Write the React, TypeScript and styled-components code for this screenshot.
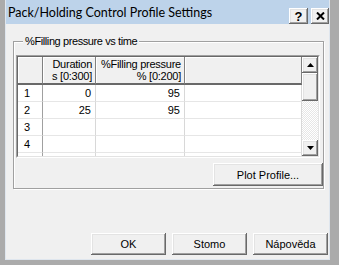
import { Fragment } from "react";
import styled, { createGlobalStyle } from "styled-components";

const GlobalStyle = createGlobalStyle`
  html, body {
    margin: 0;
    padding: 0;
    background: #ababab;
  }
  * {
    box-sizing: border-box;
  }
`;

const bevel = `
  background: #f0f0f0;
  box-shadow: inset -1px -1px #696969, inset 1px 1px #fff, inset -2px -2px #a0a0a0, inset 2px 2px #e3e3e3;
`;

const Window = styled.div`
  margin-left: 5px;
  width: 325px;
  height: 260px;
  background: #f0f0f0;
  border: 1px solid #dfe6ee;
  border-top: none;
  display: flex;
  flex-direction: column;
  font-family: "Liberation Sans", Arial, sans-serif;
  font-size: 11px;
  color: #000;
`;

const TitleBar = styled.div`
  height: 24px;
  background: #bdd3ea;
  display: flex;
  align-items: center;
  justify-content: space-between;
  padding-left: 2px;
`;

const Title = styled.span`
  font-family: Lato, "Noto Sans", sans-serif;
  font-size: 12.5px;
  padding-top: 1px;
`;

const TitleButtons = styled.div`
  display: flex;
  gap: 3px;
  align-self: flex-end;
`;

const CapButton = styled.div<{ $w: number }>`
  ${bevel}
  width: ${(p) => p.$w}px;
  height: 16px;
  display: flex;
  align-items: center;
  justify-content: center;
  font-family: "Liberation Sans", Arial, sans-serif;
  font-weight: bold;
  font-size: 13px;
`;

const Body = styled.div`
  flex: 1;
  display: flex;
  flex-direction: column;
  padding: 11px 1px 4px 7px;
`;

const Group = styled.fieldset`
  margin: 0 4px 0 0;
  padding: 7px 0 0 2px;
  min-width: 0;
  border: 1px solid #a0a0a0;
  box-shadow: 1px 1px 0 #fff, inset 1px 1px 0 #fff;
  display: flex;
  flex-direction: column;
  height: 154px;
`;

const Legend = styled.legend`
  margin-left: 7px;
  padding: 0 2px;
  line-height: 13px;
  background: #f0f0f0;
  letter-spacing: -0.4px;
`;

const GridFrame = styled.div`
  width: 304px;
  height: 103px;
  border: 1px solid;
  border-color: #a0a0a0 #fff #fff #a0a0a0;
`;

const GridInner = styled.div`
  height: 100%;
  border: 1px solid;
  border-color: #696969 #e3e3e3 #e3e3e3 #696969;
  display: flex;
  overflow: hidden;
  background: #fff;
`;

const Table = styled.div`
  flex: 1;
  display: grid;
  grid-template-columns: 25px 53px 89px 1fr;
  grid-template-rows: 28px;
  grid-auto-rows: 17px;
  align-content: start;
`;

const HeadCell = styled.div`
  background: #f0f0f0;
  border-right: 1px solid #808080;
  border-bottom: 2px solid #696969;
  box-shadow: inset 1px 1px #fff;
  display: flex;
  flex-direction: column;
  justify-content: center;
  align-items: flex-end;
  padding-right: 3px;
  line-height: 12px;
  letter-spacing: -0.25px;
`;

const Cell = styled.div<{ $align?: "left" | "right" }>`
  border-right: 1px solid #d8d8d8;
  border-bottom: 1px solid #e6e6e6;
  display: flex;
  align-items: center;
  justify-content: ${(p) => (p.$align === "left" ? "flex-start" : "flex-end")};
  padding: ${(p) => (p.$align === "left" ? "0 0 0 6px" : "0 4px 0 0")};
  line-height: 16px;
`;

const RowHead = styled(Cell)`
  border-right: 1px solid #a0a0a0;
`;

const ScrollBar = styled.div`
  width: 16px;
  display: flex;
  flex-direction: column;
`;

const ScrollBtn = styled.div`
  ${bevel}
  height: 16px;
  display: flex;
  align-items: center;
  justify-content: center;
`;

const Thumb = styled.div`
  ${bevel}
  height: 28px;
`;

const Track = styled.div`
  flex: 1;
  background: repeating-conic-gradient(#fff 0 25%, #e6e6e6 0 50%) 0 0 / 2px 2px;
`;

const PushButton = styled.div<{ $w: number }>`
  ${bevel}
  width: ${(p) => p.$w}px;
  height: 23px;
  display: flex;
  align-items: center;
  justify-content: center;
`;

const PlotButton = styled(PushButton)`
  align-self: flex-end;
  margin-top: 5px;
`;

const Footer = styled.div`
  margin-top: auto;
  display: flex;
  justify-content: flex-end;
  gap: 6px;
`;

const FooterButton = styled(PushButton)`
  height: 22px;
`;

const Arrow = ({ up }: { up?: boolean }) => (
  <svg width="7" height="4" viewBox="0 0 7 4">
    <path d={up ? "M3.5 0 L7 4 L0 4 Z" : "M0 0 L7 0 L3.5 4 Z"} fill="#000" />
  </svg>
);

const rows = [
  { n: "1", d: "0", p: "95" },
  { n: "2", d: "25", p: "95" },
  { n: "3", d: "", p: "" },
  { n: "4", d: "", p: "" },
  { n: "5", d: "", p: "" },
];

export default function App() {
  return (
    <>
      <GlobalStyle />
      <Window>
        <TitleBar>
          <Title>Pack/Holding Control Profile Settings</Title>
          <TitleButtons>
            <CapButton $w={19}>?</CapButton>
            <CapButton $w={18}>
              <svg width="9" height="8" viewBox="0 0 9 8">
                <path d="M1 0.5 L8 7.5 M8 0.5 L1 7.5" stroke="#000" strokeWidth="2" />
              </svg>
            </CapButton>
          </TitleButtons>
        </TitleBar>
        <Body>
          <Group>
            <Legend>%Filling pressure vs time</Legend>
            <GridFrame>
              <GridInner>
                <Table>
                  <HeadCell />
                  <HeadCell>
                    <span>Duration</span>
                    <span>s [0:300]</span>
                  </HeadCell>
                  <HeadCell>
                    <span>%Filling pressure</span>
                    <span>% [0:200]</span>
                  </HeadCell>
                  <HeadCell />
                  {rows.map((r) => (
                    <Fragment key={r.n}>
                      <RowHead $align="left">{r.n}</RowHead>
                      <Cell>{r.d}</Cell>
                      <Cell>{r.p}</Cell>
                      <Cell />
                    </Fragment>
                  ))}
                </Table>
                <ScrollBar>
                  <ScrollBtn>
                    <Arrow up />
                  </ScrollBtn>
                  <Thumb />
                  <Track />
                  <ScrollBtn>
                    <Arrow />
                  </ScrollBtn>
                </ScrollBar>
              </GridInner>
            </GridFrame>
            <PlotButton $w={110}>Plot Profile...</PlotButton>
          </Group>
          <Footer>
            <FooterButton $w={75}>OK</FooterButton>
            <FooterButton $w={75}>Stomo</FooterButton>
            <FooterButton $w={75}>Nápověda</FooterButton>
          </Footer>
        </Body>
      </Window>
    </>
  );
}
